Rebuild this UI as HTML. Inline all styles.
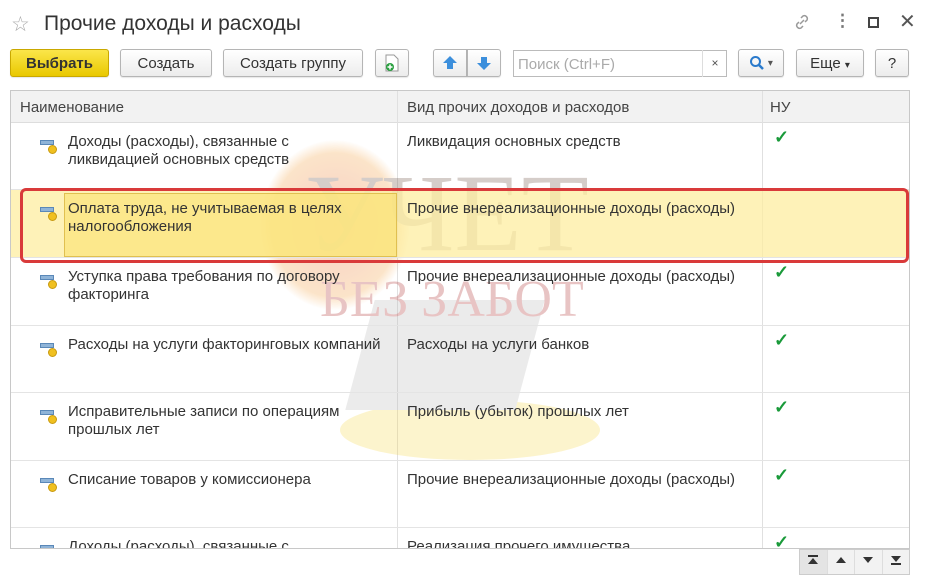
<!DOCTYPE html>
<html><head><meta charset="utf-8"><style>
*{box-sizing:border-box}
body{margin:0;width:925px;height:578px;background:#fff;font-family:"Liberation Sans",Arial,sans-serif;position:relative;overflow:hidden;color:#333}
.a{position:absolute}
.btn{position:absolute;top:49px;height:28px;border:1px solid #b5b5b5;border-radius:3px;background:linear-gradient(#fff,#ececec);font-size:15px;color:#333;text-align:center;line-height:28px;box-shadow:0 1px 1px rgba(0,0,0,.1)}
.row{position:absolute;left:11px;width:898px;border-bottom:1px solid #e4e4e4;font-size:15px;line-height:18px;color:#333}
.c1{position:absolute;left:57px;top:10px;width:318px}
.c2{position:absolute;left:396px;top:10px}
.ck{position:absolute;left:763px;top:5px;color:#1a9a3a;font-size:18px;font-weight:bold}
.ic{position:absolute;left:29px;top:17px;width:14px;height:5px;background:#8fb4d8;border:1px solid #5a88b8}
.ic:after{content:"";position:absolute;left:7px;top:4px;width:7px;height:7px;border-radius:50%;background:#f0c020;border:1px solid #c89a10}
</style></head><body>
<div class="a" style="left:11px;top:12px;font-size:21px;color:#aaa">☆</div>
<div class="a" style="left:44px;top:12px;font-size:21px;color:#333">Прочие доходы и расходы</div>
<svg class="a" style="left:792px;top:12px" width="20" height="20" viewBox="0 0 20 20"><path d="M8 12l4-4M9 6l2-2a3 3 0 014 4l-2 2M11 14l-2 2a3 3 0 01-4-4l2-2" fill="none" stroke="#999" stroke-width="1.5"/></svg>
<div class="a" style="left:834px;top:11px;font-size:17px;color:#777;font-weight:bold">⋮</div>
<div class="a" style="left:868px;top:17px;width:11px;height:11px;border:2px solid #444"></div>
<div class="a" style="left:899px;top:9px;font-size:20px;color:#555">✕</div>

<div class="btn" style="left:10px;width:99px;background:linear-gradient(#fbe64a,#e9c800);border-color:#c9a800;font-weight:bold">Выбрать</div>
<div class="btn" style="left:120px;width:92px">Создать</div>
<div class="btn" style="left:223px;width:140px">Создать группу</div>
<div class="btn" style="left:375px;width:34px"><svg width="16" height="18" viewBox="0 0 16 18" style="margin-top:4px"><path d="M2 1h8l4 4v12H2z" fill="#fff" stroke="#999"/><circle cx="6" cy="13" r="4" fill="#2aa040"/><path d="M6 10.5v5M3.5 13h5" stroke="#fff" stroke-width="1.5"/></svg></div>
<div class="btn" style="left:433px;width:34px;border-radius:3px 0 0 3px"><svg width="16" height="16" style="margin-top:5px"><path d="M8 1L1 8h4v6h6V8h4z" fill="#3c8fdc"/></svg></div>
<div class="btn" style="left:467px;width:34px;border-radius:0 3px 3px 0"><svg width="16" height="16" style="margin-top:5px"><path d="M8 15L1 8h4V2h6v6h4z" fill="#3c8fdc"/></svg></div>
<div class="a" style="left:513px;top:50px;width:214px;height:27px;border:1px solid #bbb;font-size:15px;color:#aaa;padding:5px 4px">Поиск (Ctrl+F)</div>
<div class="a" style="left:702px;top:50px;width:25px;height:27px;border-left:1px solid #ddd;font-size:12px;color:#555;text-align:center;line-height:27px">×</div>
<div class="btn" style="left:738px;width:46px"><svg width="16" height="16" style="margin-top:5px"><circle cx="6.5" cy="6.5" r="4.5" fill="none" stroke="#2a7acc" stroke-width="2"/><path d="M10 10l4 4" stroke="#2a7acc" stroke-width="2.5"/></svg><span style="color:#555;font-size:10px;vertical-align:top"> ▾</span></div>
<div class="btn" style="left:796px;width:68px">Еще <span style="font-size:10px">▾</span></div>
<div class="btn" style="left:875px;width:34px">?</div>

<div class="a" style="left:10px;top:90px;width:900px;height:459px;border:1px solid #c8c8c8"></div>
<div class="a" style="left:11px;top:91px;width:898px;height:32px;background:#f2f2f2;border-bottom:1px solid #ddd;font-size:15px;color:#444">
<span class="a" style="left:9px;top:8px">Наименование</span>
<span class="a" style="left:396px;top:8px">Вид прочих доходов и расходов</span>
<span class="a" style="left:759px;top:8px">НУ</span></div>
<div class="a" style="left:397px;top:91px;width:1px;height:457px;background:#e0e0e0"></div>
<div class="a" style="left:762px;top:91px;width:1px;height:457px;background:#e0e0e0"></div>

<div class="a" style="left:230px;top:100px;width:420px;height:380px;opacity:.28">
<div class="a" style="left:30px;top:40px;width:150px;height:170px;border-radius:50%;background:radial-gradient(#e85030,#f3a040 60%,transparent 71%)"></div>
<div class="a" style="left:110px;top:300px;width:260px;height:60px;border-radius:50%;background:#f6d850"></div>
<div class="a" style="left:130px;top:200px;width:170px;height:110px;background:#bbb;transform:skewX(-15deg)"></div>
<div class="a" style="left:75px;top:50px;font-family:'Liberation Serif',serif;font-size:110px;color:#6a5040">УЧЕТ</div>
<div class="a" style="left:90px;top:170px;font-family:'Liberation Serif',serif;font-size:52px;color:#b03030">БЕЗ ЗАБОТ</div>
</div>

<div class="row" style="top:123px;height:67px"><i class="ic"></i><div class="c1">Доходы (расходы), связанные с<br>ликвидацией основных средств</div><div class="c2">Ликвидация основных средств</div><div class="ck">✓</div></div>
<div class="row" style="top:190px;height:68px;background:rgba(253,238,160,.75)"><div class="a" style="left:53px;top:3px;width:333px;height:64px;background:rgba(250,225,110,.6);border:1px solid #e0c050"></div><i class="ic"></i><div class="c1">Оплата труда, не учитываемая в целях налогообложения</div><div class="c2">Прочие внереализационные доходы (расходы)</div></div>
<div class="row" style="top:258px;height:68px"><i class="ic"></i><div class="c1">Уступка права требования по договору факторинга</div><div class="c2">Прочие внереализационные доходы (расходы)</div><div class="ck">✓</div></div>
<div class="row" style="top:326px;height:67px"><i class="ic"></i><div class="c1" style="width:330px">Расходы на услуги факторинговых компаний</div><div class="c2">Расходы на услуги банков</div><div class="ck">✓</div></div>
<div class="row" style="top:393px;height:68px"><i class="ic"></i><div class="c1">Исправительные записи по операциям прошлых лет</div><div class="c2">Прибыль (убыток) прошлых лет</div><div class="ck">✓</div></div>
<div class="row" style="top:461px;height:67px"><i class="ic"></i><div class="c1">Списание товаров у комиссионера</div><div class="c2">Прочие внереализационные доходы (расходы)</div><div class="ck">✓</div></div>
<div class="row" style="top:528px;height:20px;overflow:hidden;border:none"><i class="ic"></i><div class="c1">Доходы (расходы), связанные с</div><div class="c2">Реализация прочего имущества</div><div class="ck">✓</div></div>

<div class="a" style="left:20px;top:188px;width:889px;height:75px;border:3px solid #d93a3a;border-radius:6px"></div>

<div class="a" style="left:799px;top:549px;width:111px;height:26px;border:1px solid #ccc;background:#f2f2f2;display:flex;font-size:11px;color:#333">
<div style="flex:1;text-align:center;line-height:24px;border-right:1px solid #ddd;background:#e4e4e4"><svg width="12" height="10"><path d="M1 1h10" stroke="#333" stroke-width="2"/><path d="M1 9l5-6 5 6z" fill="#333"/></svg></div>
<div style="flex:1;text-align:center;line-height:24px;border-right:1px solid #ddd"><svg width="12" height="10"><path d="M1 8l5-6 5 6z" fill="#333"/></svg></div>
<div style="flex:1;text-align:center;line-height:24px;border-right:1px solid #ddd"><svg width="12" height="10"><path d="M1 2l5 6 5-6z" fill="#333"/></svg></div>
<div style="flex:1;text-align:center;line-height:24px"><svg width="12" height="10"><path d="M1 1l5 6 5-6z" fill="#333"/><path d="M1 9h10" stroke="#333" stroke-width="2"/></svg></div></div>
</body></html>
